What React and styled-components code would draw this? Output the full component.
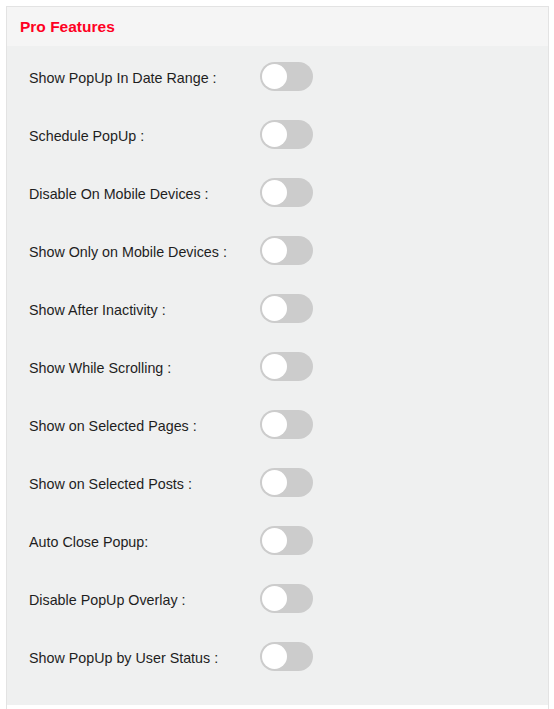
import React from "react";
import styled, { createGlobalStyle } from "styled-components";

const Global = createGlobalStyle`
  html, body { margin: 0; padding: 0; background: #fff; }
  body { font-family: "Liberation Sans", Arial, sans-serif; }
`;

const Page = styled.div`
  padding: 6px 5px 0 6px;
`;

const Panel = styled.div`
  border: 1px solid #e3e3e3;
  border-bottom: none;
  background: #fff;
  min-height: 702px;
`;

const Header = styled.div`
  height: 39px;
  display: flex;
  align-items: center;
  padding-left: 13px;
  background: #f5f5f5;
`;

const Title = styled.h3`
  margin: 0;
  font-size: 15.5px;
  font-weight: bold;
  color: #ff0022;
`;

const Body = styled.div`
  background: #eff0f0;
  padding: 1px 0 20px 22px;
`;

const Row = styled.div`
  height: 58px;
  display: grid;
  grid-template-columns: 231px auto;
  align-items: center;
`;

const Label = styled.span`
  font-size: 14.3px;
  color: #1e1e1e;
  padding-top: 4px;
`;

const Track = styled.span`
  display: inline-flex;
  align-items: center;
  width: 53px;
  height: 29px;
  border-radius: 15px;
  background: ${(p) => (p.$on ? "#2196f3" : "#cccccc")};
  padding: 2px;
  box-sizing: border-box;
  justify-content: ${(p) => (p.$on ? "flex-end" : "flex-start")};
`;

const Knob = styled.span`
  width: 25px;
  height: 25px;
  border-radius: 50%;
  background: #fff;
`;

const items = [
  "Show PopUp In Date Range :",
  "Schedule PopUp :",
  "Disable On Mobile Devices :",
  "Show Only on Mobile Devices :",
  "Show After Inactivity :",
  "Show While Scrolling :",
  "Show on Selected Pages :",
  "Show on Selected Posts :",
  "Auto Close Popup:",
  "Disable PopUp Overlay :",
  "Show PopUp by User Status :",
];

export default function App() {
  return (
    <>
      <Global />
      <Page>
        <Panel>
          <Header>
            <Title>Pro Features</Title>
          </Header>
          <Body>
            {items.map((t) => (
              <Row key={t}>
                <Label>{t}</Label>
                <Track>
                  <Knob />
                </Track>
              </Row>
            ))}
          </Body>
        </Panel>
      </Page>
    </>
  );
}
